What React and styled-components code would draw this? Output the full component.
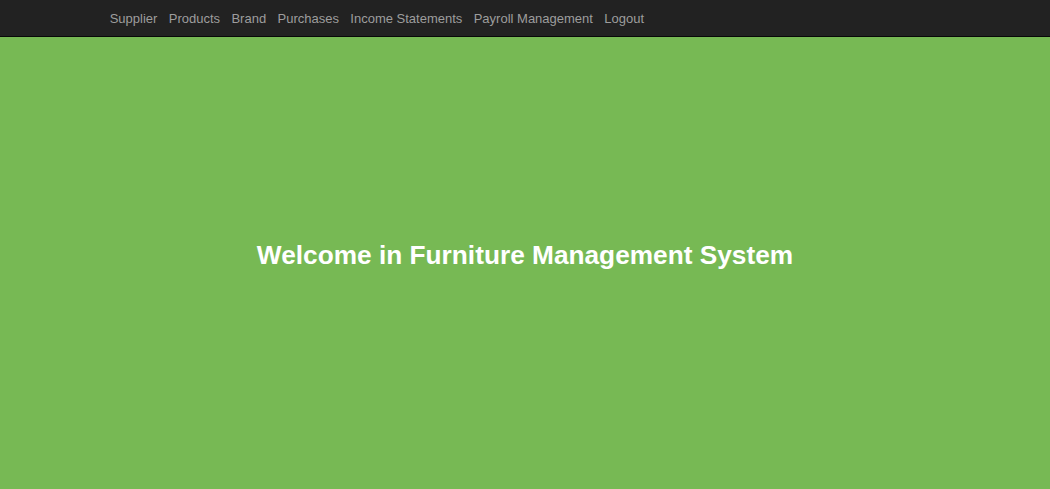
import React from 'react';
import styled, { createGlobalStyle } from 'styled-components';

const GlobalStyle = createGlobalStyle`
  html, body {
    margin: 0;
    padding: 0;
    height: 100%;
  }
  body {
    font-family: "Liberation Sans", Arial, sans-serif;
    background-color: #77b954;
  }
  #root {
    min-height: 100%;
    display: flex;
    flex-direction: column;
  }
`;

const links = [
  'Supplier',
  'Products',
  'Brand',
  'Purchases',
  'Income Statements',
  'Payroll Management',
  'Logout',
];

export default function App() {
  return (
    <Page>
      <GlobalStyle />
      <NavBar>
        <NavList>
          {links.map((link) => (
            <li key={link}>
              <NavLink href="#">{link}</NavLink>
            </li>
          ))}
        </NavList>
      </NavBar>
      <Hero>
        <Title>Welcome in Furniture Management System</Title>
      </Hero>
    </Page>
  );
}

const Page = styled.div`
  flex: 1;
  display: flex;
  flex-direction: column;
  min-height: 489px;
`;

const NavBar = styled.nav`
  background-color: #222222;
  border-bottom: 1px solid #080808;
  height: 36px;
  display: flex;
  align-items: center;
  padding-left: 104px;
`;

const NavList = styled.ul`
  list-style: none;
  margin: 0;
  padding: 0;
  display: flex;
`;

const NavLink = styled.a`
  display: block;
  padding: 0 5.7px;
  font-size: 13px;
  color: #9d9d9d;
  text-decoration: none;
  &:hover {
    color: #ffffff;
  }
`;

const Hero = styled.main`
  flex: 1;
  display: flex;
  align-items: center;
  justify-content: center;
  background-color: #77b954;
  padding-bottom: 16px;
`;

const Title = styled.h2`
  margin: 0;
  font-size: 26.25px;
  font-weight: bold;
  color: #ffffff;
`;
